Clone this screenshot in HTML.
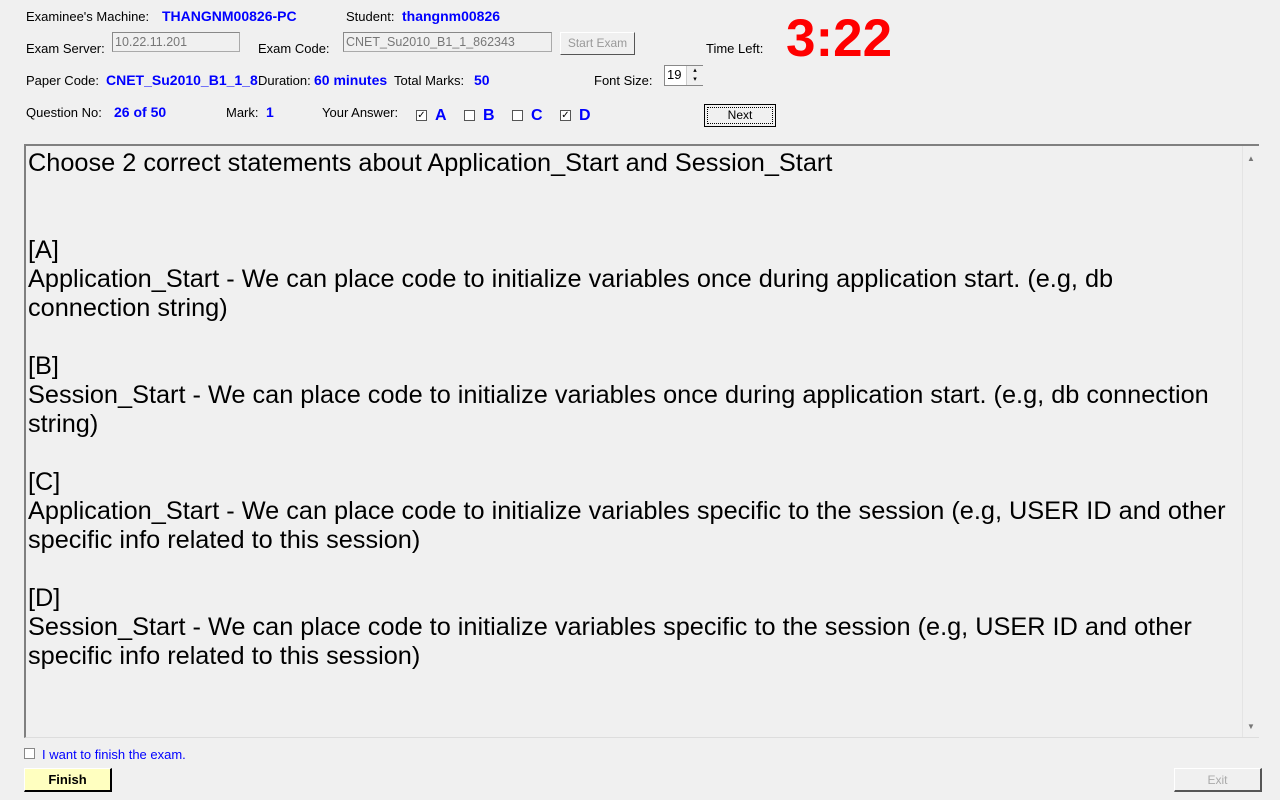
<!DOCTYPE html>
<html><head><meta charset="utf-8"><style>
body{margin:0;width:1280px;height:800px;background:#f0f0f0;font-family:"Liberation Sans",Arial,sans-serif;position:relative;overflow:hidden}
.a{position:absolute;white-space:nowrap}
.l{font-size:13px;color:#000}
.b{font-size:14px;color:#0000ff;font-weight:bold}
.tb{position:absolute;height:20px;border:1px solid #aaa;border-top-color:#888;border-left-color:#888;background:#f0f0f0;font-size:12.5px;color:#777;line-height:19px;padding-left:2px;box-sizing:border-box}
.btn{position:absolute;box-sizing:border-box;border:1px solid #fff;border-right-color:#555;border-bottom-color:#555;font-size:12px;text-align:center}
.cb{position:absolute;width:11px;height:11px;border:1px solid #555;background:#fff;box-sizing:border-box;font-size:10px;line-height:9px;text-align:center}
.ans{position:absolute;font-size:16px;font-weight:bold;color:#0000ff}
#txt{position:absolute;left:24px;top:144px;width:1235px;height:594px;border-top:2px solid #808080;border-left:2px solid #808080;border-bottom:1px solid #ddd;box-sizing:border-box}
#body{position:absolute;left:2px;top:3px;font-size:25.3px;line-height:29px;white-space:pre;color:#000}
#sb{position:absolute;right:0;top:0;width:16px;bottom:0;border-left:1px solid #e4e4e4;background:#f0f0f0}
</style></head><body>
<div class="a l" style="left:26px;top:9px">Examinee's Machine:</div>
<div class="a b" style="left:162px;top:8px">THANGNM00826-PC</div>
<div class="a l" style="left:346px;top:9px">Student:</div>
<div class="a b" style="left:402px;top:8px">thangnm00826</div>
<div class="a l" style="left:26px;top:41px">Exam Server:</div>
<div class="tb" style="left:112px;top:32px;width:128px">10.22.11.201</div>
<div class="a l" style="left:258px;top:41px">Exam Code:</div>
<div class="tb" style="left:343px;top:32px;width:209px">CNET_Su2010_B1_1_862343</div>
<div class="btn" style="left:560px;top:32px;width:75px;height:23px;color:#999;line-height:20px">Start Exam</div>
<div class="a l" style="left:706px;top:41px">Time Left:</div>
<div class="a" style="left:786px;top:7px;font-size:53px;font-weight:bold;color:#ff0000;line-height:64px">3:22</div>
<div class="a l" style="left:26px;top:73px">Paper Code:</div>
<div class="a b" style="left:106px;top:72px;width:152px;overflow:hidden">CNET_Su2010_B1_1_862343</div>
<div class="a l" style="left:258px;top:73px">Duration:</div>
<div class="a b" style="left:314px;top:72px">60 minutes</div>
<div class="a l" style="left:394px;top:73px">Total Marks:</div>
<div class="a b" style="left:474px;top:72px">50</div>
<div class="a l" style="left:594px;top:73px">Font Size:</div>
<div style="position:absolute;left:664px;top:65px;width:39px;height:21px;border:1px solid #888;background:#fff;box-sizing:border-box;font-size:13px;line-height:18px;padding-left:2px">19</div>
<div style="position:absolute;left:686px;top:66px;width:16px;height:19px;background:#f0f0f0;border-left:1px solid #ccc;font-size:7px;line-height:9px;text-align:center">▴<br>▾</div>
<div class="a l" style="left:26px;top:105px">Question No:</div>
<div class="a b" style="left:114px;top:104px">26 of 50</div>
<div class="a l" style="left:226px;top:105px">Mark:</div>
<div class="a b" style="left:266px;top:104px">1</div>
<div class="a l" style="left:322px;top:105px">Your Answer:</div>
<div class="cb" style="left:416px;top:110px">✓</div><div class="ans" style="left:435px;top:107px">A</div>
<div class="cb" style="left:464px;top:110px"></div><div class="ans" style="left:483px;top:107px">B</div>
<div class="cb" style="left:512px;top:110px"></div><div class="ans" style="left:531px;top:107px">C</div>
<div class="cb" style="left:560px;top:110px">✓</div><div class="ans" style="left:579px;top:107px">D</div>
<div class="btn" style="left:704px;top:104px;width:72px;height:23px;border:1px solid #000;line-height:19px"><div style="margin:2px;border:1px dotted #000;height:15px;line-height:15px">Next</div></div>
<div id="txt"><div id="body">Choose 2 correct statements about Application_Start and Session_Start


[A]
Application_Start - We can place code to initialize variables once during application start. (e.g, db
connection string)

[B]
Session_Start - We can place code to initialize variables once during application start. (e.g, db connection
string)

[C]
Application_Start - We can place code to initialize variables specific to the session (e.g, USER ID and other
specific info related to this session)

[D]
Session_Start - We can place code to initialize variables specific to the session (e.g, USER ID and other
specific info related to this session)</div>
<div id="sb"><div style="position:absolute;left:4px;top:8px;font-size:8px;color:#777">▲</div><div style="position:absolute;left:4px;bottom:6px;font-size:8px;color:#777">▼</div></div></div>
<div class="cb" style="left:24px;top:748px;border-color:#888"></div>
<div class="a" style="left:42px;top:747px;font-size:13px;color:#0000ff">I want to finish the exam.</div>
<div class="btn" style="left:24px;top:768px;width:88px;height:24px;background:#ffffc0;border-right:2px solid #000;border-bottom:2px solid #000;font-weight:bold;font-size:13px;line-height:22px">Finish</div>
<div class="btn" style="left:1174px;top:768px;width:88px;height:24px;color:#aaa;border-right-width:2px;border-bottom-width:2px;line-height:22px">Exit</div>
</body></html>
